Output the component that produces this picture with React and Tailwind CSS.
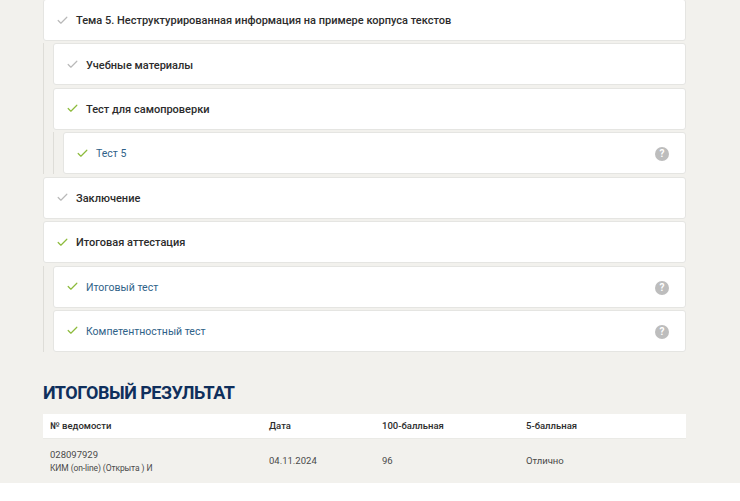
import { Check } from "lucide-react";

const font = { fontFamily: 'Roboto, "Noto Sans", sans-serif' };

function Row({ title, done, link, help }) {
    return (
        <div className="h-[42px] flex items-center bg-white border border-[#e5e5e2] rounded-[3px] pl-[12px] pr-[16px]">
            <Check
                className={`w-[13px] h-[13px] shrink-0 ${done ? "text-[#8dbb3c]" : "text-[#b9b9b9]"}`}
                strokeWidth={2.2}
            />
            <span
                className={`ml-[7px] ${link ? "pt-[2px] text-[10.5px] text-[#2f6288]" : "pt-[3px] text-[11px] font-medium text-[#2c2c2c]"}`}
            >
                {title}
            </span>
            {help && (
                <span className="ml-auto mt-[2px] w-[14px] h-[14px] rounded-full bg-[#bdbdbd] text-white text-[10px] font-bold leading-[14px] text-center">
                    ?
                </span>
            )}
        </div>
    );
}

function Nested({ children }) {
    return (
        <div className="flex flex-col gap-[2.43px] pl-[9px] border-l border-[#deddd8]">
            {children}
        </div>
    );
}

export default function App() {
    return (
        <div className="h-[501px] overflow-hidden bg-white" style={font}>
            <div className="h-[484px] bg-[#f2f1ed] pl-[43px] pr-[54px]">
                <div className="flex flex-col gap-[2.43px] -mt-[1px]">
                    <Row title="Тема 5. Неструктурированная информация на примере корпуса текстов" />
                    <Nested>
                        <Row title="Учебные материалы" />
                        <Row title="Тест для самопроверки" done />
                        <Nested>
                            <Row title="Тест 5" done link help />
                        </Nested>
                    </Nested>
                    <Row title="Заключение" />
                    <Row title="Итоговая аттестация" done />
                    <Nested>
                        <Row title="Итоговый тест" done link help />
                        <Row title="Компетентностный тест" done link help />
                    </Nested>
                </div>

                <h2 className="mt-[27px] text-[18px] leading-[28px] font-bold tracking-[-0.5px] text-[#0f2f5c]">
                    ИТОГОВЫЙ РЕЗУЛЬТАТ
                </h2>

                <div className="mt-[7px]">
                    <div className="h-[25px] grid grid-cols-[219px_113px_144px_1fr] items-center bg-white pl-[7px] pt-[1px] border-b border-[#eaeae6] text-[9.5px] font-medium text-[#2c2c2c]">
                        <span>№ ведомости</span>
                        <span>Дата</span>
                        <span>100-балльная</span>
                        <span>5-балльная</span>
                    </div>
                    <div className="h-[45px] grid grid-cols-[219px_113px_144px_1fr] items-center pl-[7px] text-[9.5px] text-[#4a4a4a]">
                        <div>
                            <div className="leading-[15px]">028097929</div>
                            <div className="text-[8.5px] tracking-[-0.1px] leading-[13px]">КИМ (on-line) (Открыта ) И</div>
                        </div>
                        <span>04.11.2024</span>
                        <span>96</span>
                        <span>Отлично</span>
                    </div>
                </div>
            </div>
        </div>
    );
}
